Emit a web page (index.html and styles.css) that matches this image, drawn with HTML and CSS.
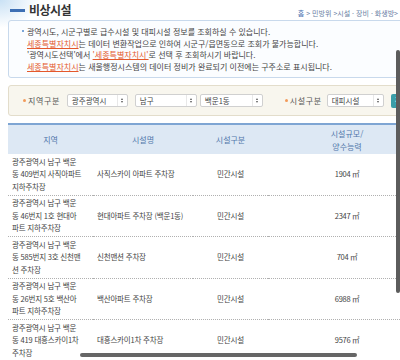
FILE: index.html
```html
<!DOCTYPE html>
<html lang="ko">
<head>
<meta charset="utf-8">
<title>비상시설</title>
<link rel="stylesheet" href="styles.css">
</head>
<body>
<div class="page">
  <div class="head">
    <h1 class="title"><span class="dash"></span>비상시설</h1>
    <div class="crumb"><span class="home">홈</span> &gt; 민방위 &gt;시설 · 장비 · 화생방&gt;</div>
  </div>
  <div class="notice">
    <p><span class="dot"></span>광역시도, 시군구별로 급수시설 및 대피시설 정보를 조회하실 수 있습니다.</p>
    <p><span class="red">세종특별자치시</span>는 데이터 변환작업으로 인하여 시군구/읍면동으로 조회가 불가능합니다.</p>
    <p>'광역시도선택'에서 <span class="red">'세종특별자치시'</span>로 선택 후 조회하시기 바랍니다.</p>
    <p><span class="red">세종특별자치시</span>는 새울행정시스템의 데이터 정비가 완료되기 이전에는 구주소로 표시됩니다.</p>
  </div>
  <div class="search">
    <span class="label"><i class="bul"></i>지역구분</span>
    <div class="sel s1"><span class="val">광주광역시</span><span class="arr"><i class="up"></i><i class="dn"></i></span></div>
    <div class="sel s2"><span class="val">남구</span><span class="arr"><i class="up"></i><i class="dn"></i></span></div>
    <div class="sel s3"><span class="val">백운1동</span><span class="arr"><i class="up"></i><i class="dn"></i></span></div>
    <span class="label l2"><i class="bul"></i>시설구분</span>
    <div class="sel s4"><span class="val">대피시설</span><span class="arr"><i class="up"></i><i class="dn"></i></span></div>
    <button class="btn">검색</button>
  </div>
  <table class="list">
    <colgroup><col class="c1"><col class="c2"><col class="c3"><col class="c4"></colgroup>
    <thead>
      <tr><th>지역</th><th>시설명</th><th>시설구분</th><th>시설규모/<br>양수능력</th></tr>
    </thead>
    <tbody>
      <tr><td class="addr">광주광역시 남구 백운<br>동 409번지 사직아파트<br>지하주차장</td><td class="name">사직스카이 아파트 주차장</td><td class="type">민간시설</td><td class="size">1904 ㎡</td></tr>
      <tr><td class="addr">광주광역시 남구 백운<br>동 46번지 1호 현대아<br>파트 지하주차장</td><td class="name">현대아파트 주차장 (백운1동)</td><td class="type">민간시설</td><td class="size">2347 ㎡</td></tr>
      <tr><td class="addr">광주광역시 남구 백운<br>동 585번지 3호 신천맨<br>션 주차장</td><td class="name">신천맨션 주차장</td><td class="type">민간시설</td><td class="size">704 ㎡</td></tr>
      <tr><td class="addr">광주광역시 남구 백운<br>동 26번지 5호 백산아<br>파트 지하주차장</td><td class="name">백산아파트 주차장</td><td class="type">민간시설</td><td class="size">6988 ㎡</td></tr>
      <tr><td class="addr">광주광역시 남구 백운<br>동 419 대흥스카이1차<br>주차장</td><td class="name">대흥스카이1차 주차장</td><td class="type">민간시설</td><td class="size">9576 ㎡</td></tr>
    </tbody>
  </table>
</div>
<div class="vscroll"></div>
<div class="hscroll"></div>
</body>
</html>
```

FILE: styles.css
```css
html, body {
  margin: 0;
  padding: 0;
}
body {
  width: 400px;
  height: 360px;
  overflow: hidden;
  position: relative;
  font-family: "Noto Sans CJK KR", "Noto Sans", sans-serif;
  color: #444;
  background:
    radial-gradient(ellipse 40px 28px at 0 0, rgba(196, 222, 244, 0.9), rgba(255, 255, 255, 0) 100%),
    #fff;
}
.page {
  width: 430px;
  padding: 2px 0 0 8px;
}
.head {
  width: 392px;
  height: 16px;
  display: flex;
  align-items: center;
  justify-content: space-between;
}
.title {
  margin: 0;
  padding-left: 2px;
  display: flex;
  align-items: center;
  font-size: 12px;
  font-weight: bold;
  color: #333;
  letter-spacing: -0.5px;
  line-height: 16px;
}
.dash {
  width: 15px;
  height: 3px;
  background: #3d6fb4;
  margin-right: 4px;
}
.crumb {
  font-size: 7px;
  color: #6a80a4;
  white-space: nowrap;
  padding-top: 5px;
  margin-right: 2px;
}
.home {
  color: #4a6fb0;
}
.notice {
  margin-top: 2px;
  width: 410px;
  box-sizing: border-box;
  border: 1px solid #c8d9ec;
  border-radius: 3px;
  background: #fbfdff;
  padding: 5px 0 5px 18px;
  font-size: 8px;
  line-height: 11.5px;
  color: #444;
}
.notice p {
  margin: 0;
  white-space: nowrap;
  position: relative;
}
.dot {
  position: absolute;
  left: -5px;
  top: 4px;
  width: 2px;
  height: 2px;
  background: #7aa6d8;
}
.red {
  color: #e4582c;
  text-decoration: underline;
}
.search {
  margin-top: 7px;
  width: 410px;
  height: 31px;
  box-sizing: border-box;
  border: 1px solid #e3ddcb;
  border-radius: 3px;
  background: #f8f6ee;
  display: flex;
  align-items: center;
  padding-left: 14px;
}
.label {
  display: flex;
  align-items: center;
  font-size: 8px;
  letter-spacing: 0.6px;
  color: #555;
  white-space: nowrap;
}
.bul {
  width: 3px;
  height: 3px;
  border-radius: 50%;
  background: #f29a5a;
  margin-right: 2px;
}
.l2 {
  margin-left: 22px;
}
.sel {
  height: 13px;
  box-sizing: border-box;
  border: 1px solid #d0d0d0;
  border-radius: 2px;
  background: #fff;
  display: flex;
  align-items: center;
  font-size: 7.5px;
  color: #444;
  white-space: nowrap;
}
.val {
  flex: 1;
  padding-left: 4px;
}
.arr {
  width: 9px;
  height: 100%;
  border-left: 1px solid #e8e8e8;
  display: flex;
  flex-direction: column;
  align-items: center;
  justify-content: center;
  gap: 1px;
}
.up, .dn {
  width: 0;
  height: 0;
  border-left: 1.5px solid transparent;
  border-right: 1.5px solid transparent;
}
.up {
  border-bottom: 2px solid #555;
}
.dn {
  border-top: 2px solid #555;
}
.s1 { margin-left: 7px; width: 61px; }
.s2 { margin-left: 7px; width: 62px; }
.s3 { margin-left: 3px; width: 63px; }
.s4 { margin-left: 5px; width: 57px; }
.btn {
  margin-left: 7px;
  height: 14px;
  padding: 0 4px;
  border: 0;
  border-radius: 2px;
  background: #3a9ea8;
  color: #fff;
  font-family: inherit;
  font-size: 7.5px;
  line-height: 14px;
  white-space: nowrap;
}
.list {
  margin-top: 7px;
  width: 418px;
  table-layout: fixed;
  border-collapse: collapse;
}
.c1 { width: 85px; }
.c2 { width: 100px; }
.c3 { width: 75px; }
.c4 { width: 158px; }
.list th {
  height: 29px;
  padding: 0;
  border-top: 2px solid #7ea5d3;
  background: #dde8f4;
  color: #5177ab;
  font-weight: normal;
  font-size: 8px;
  line-height: 13px;
  text-align: center;
}
.list td {
  padding: 1.5px 4px;
  border-bottom: 1px dotted #b0b0b0;
  font-size: 7.5px;
  line-height: 12.5px;
  letter-spacing: -0.2px;
  color: #444;
  vertical-align: middle;
  white-space: nowrap;
}
.addr { text-align: left; }
.name { text-align: left; }
.type { text-align: center; }
.size {
  text-align: center;
  padding-left: 0;
  padding-right: 8px;
}
.vscroll {
  position: absolute;
  right: 0;
  top: 50px;
  width: 4px;
  height: 243px;
  background: #5c5c5c;
  border-radius: 2px;
}
.hscroll {
  position: absolute;
  left: 80px;
  top: 353px;
  width: 277px;
  height: 4px;
  background: #666;
  border-radius: 2px;
}
```
